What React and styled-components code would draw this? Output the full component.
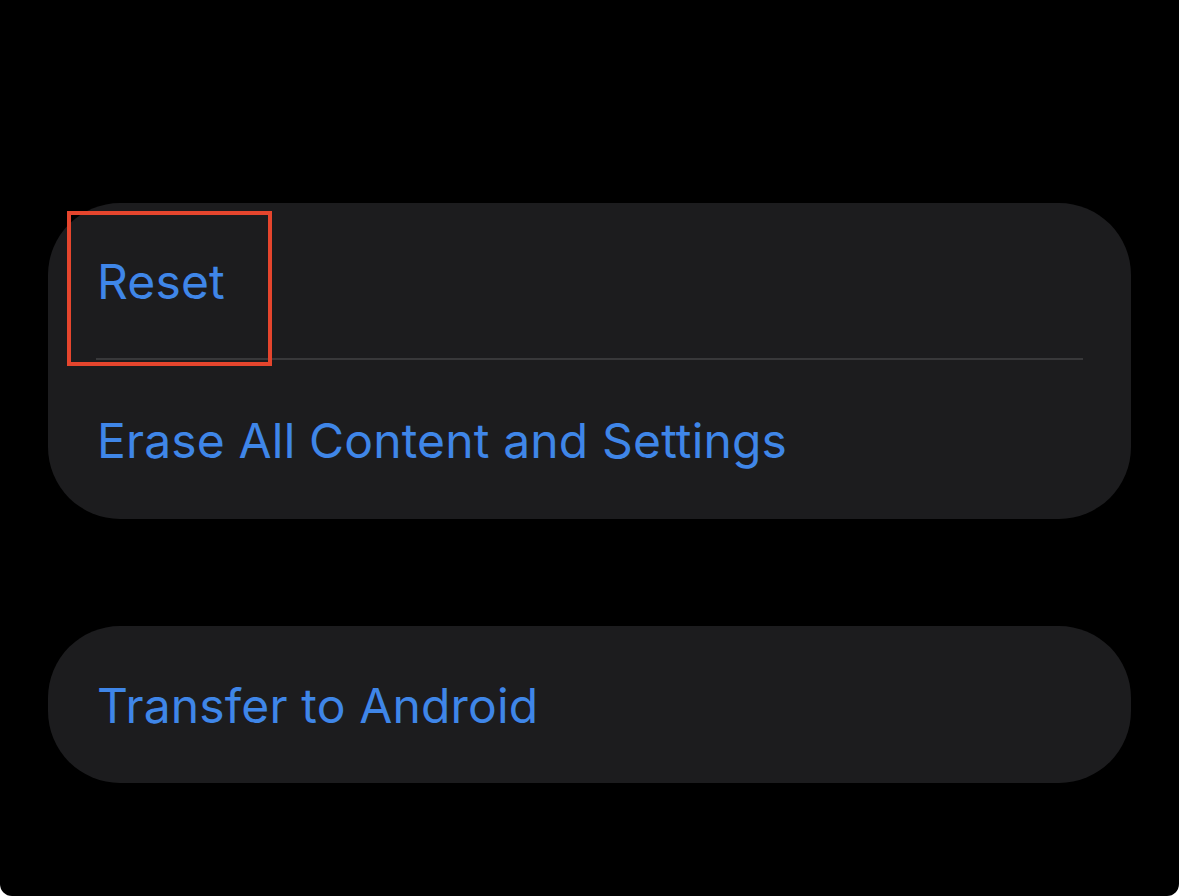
import React from 'react';
import styled, { createGlobalStyle } from 'styled-components';

const Global = createGlobalStyle`
  html, body {
    margin: 0;
    padding: 0;
    background: #ffffff;
  }
  body {
    font-family: Inter, "Noto Sans", sans-serif;
    -webkit-font-smoothing: antialiased;
  }
`;

const Screen = styled.div`
  width: 1179px;
  height: 896px;
  box-sizing: border-box;
  background: #000000;
  border-radius: 0 0 12px 12px;
  padding: 203px 48px 0;
  display: flex;
  flex-direction: column;
  gap: 107px;
`;

const Card = styled.div`
  position: relative;
  background: #1c1c1e;
  border-radius: 72px;
  display: flex;
  flex-direction: column;
`;

const Row = styled.div`
  height: ${(p) => p.h}px;
  box-sizing: border-box;
  padding: 3px 0 0 49px;
  display: flex;
  align-items: center;
  font-size: 48px;
  line-height: 1;
  color: #3f86e8;
  letter-spacing: 0.15px;
`;

const Divider = styled.div`
  height: 2px;
  margin: 0 48px;
  background: #38383a;
`;

const Highlight = styled.div`
  position: absolute;
  left: 19px;
  top: 8px;
  width: 205px;
  height: 155px;
  box-sizing: border-box;
  border: 4px solid #e5452d;
  pointer-events: none;
`;

export default function App() {
  return (
    <>
      <Global />
      <Screen>
        <Card>
          <Row h={155}>Reset</Row>
          <Divider />
          <Row h={159}>Erase All Content and Settings</Row>
          <Highlight />
        </Card>
        <Card>
          <Row h={157}>Transfer to Android</Row>
        </Card>
      </Screen>
    </>
  );
}
